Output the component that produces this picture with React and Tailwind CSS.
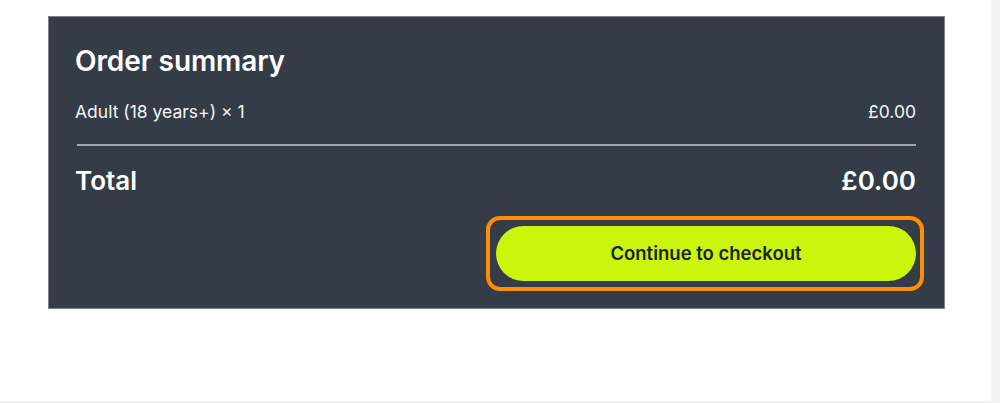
import React from "react";

export default function App() {
  return (
    <div className="w-[1000px] h-[403px] bg-[#f2f2f2]">
      <div className="w-[991px] h-[401px] bg-white pt-4 pl-12 font-['Inter',_'Liberation_Sans',_sans-serif]">
        <div className="w-[897px] bg-[#343c47] border border-[#7c828b] pl-[26px] pr-7 pt-[26px] pb-[27px] text-white">
          <h2 className="text-[28px] leading-[36px] font-semibold tracking-[-0.1px]">Order summary</h2>
          <div className="mt-[21px] flex justify-between text-[17.5px] leading-[24px] text-[#f3f4f5]">
            <span>Adult (18 years+) × 1</span>
            <span>£0.00</span>
          </div>
          <div className="mt-[20px] h-[2px] bg-[#a3a7ad] ml-[2px]" />
          <div className="mt-[19px] flex justify-between text-[26px] leading-[32px] font-semibold">
            <span>Total</span>
            <span>£0.00</span>
          </div>
          <div className="mt-[29px] flex justify-end">
            <button className="relative w-[420px] h-[55px] rounded-full bg-[#c9f60a] text-[#1b222c] text-[18.5px] font-semibold">
              <span className="absolute -left-[10px] -right-[8px] -top-[10px] -bottom-[10px] border-4 border-[#ff8f00] rounded-[14px] pointer-events-none" />
              Continue to checkout
            </button>
          </div>
        </div>
      </div>
    </div>
  );
}
